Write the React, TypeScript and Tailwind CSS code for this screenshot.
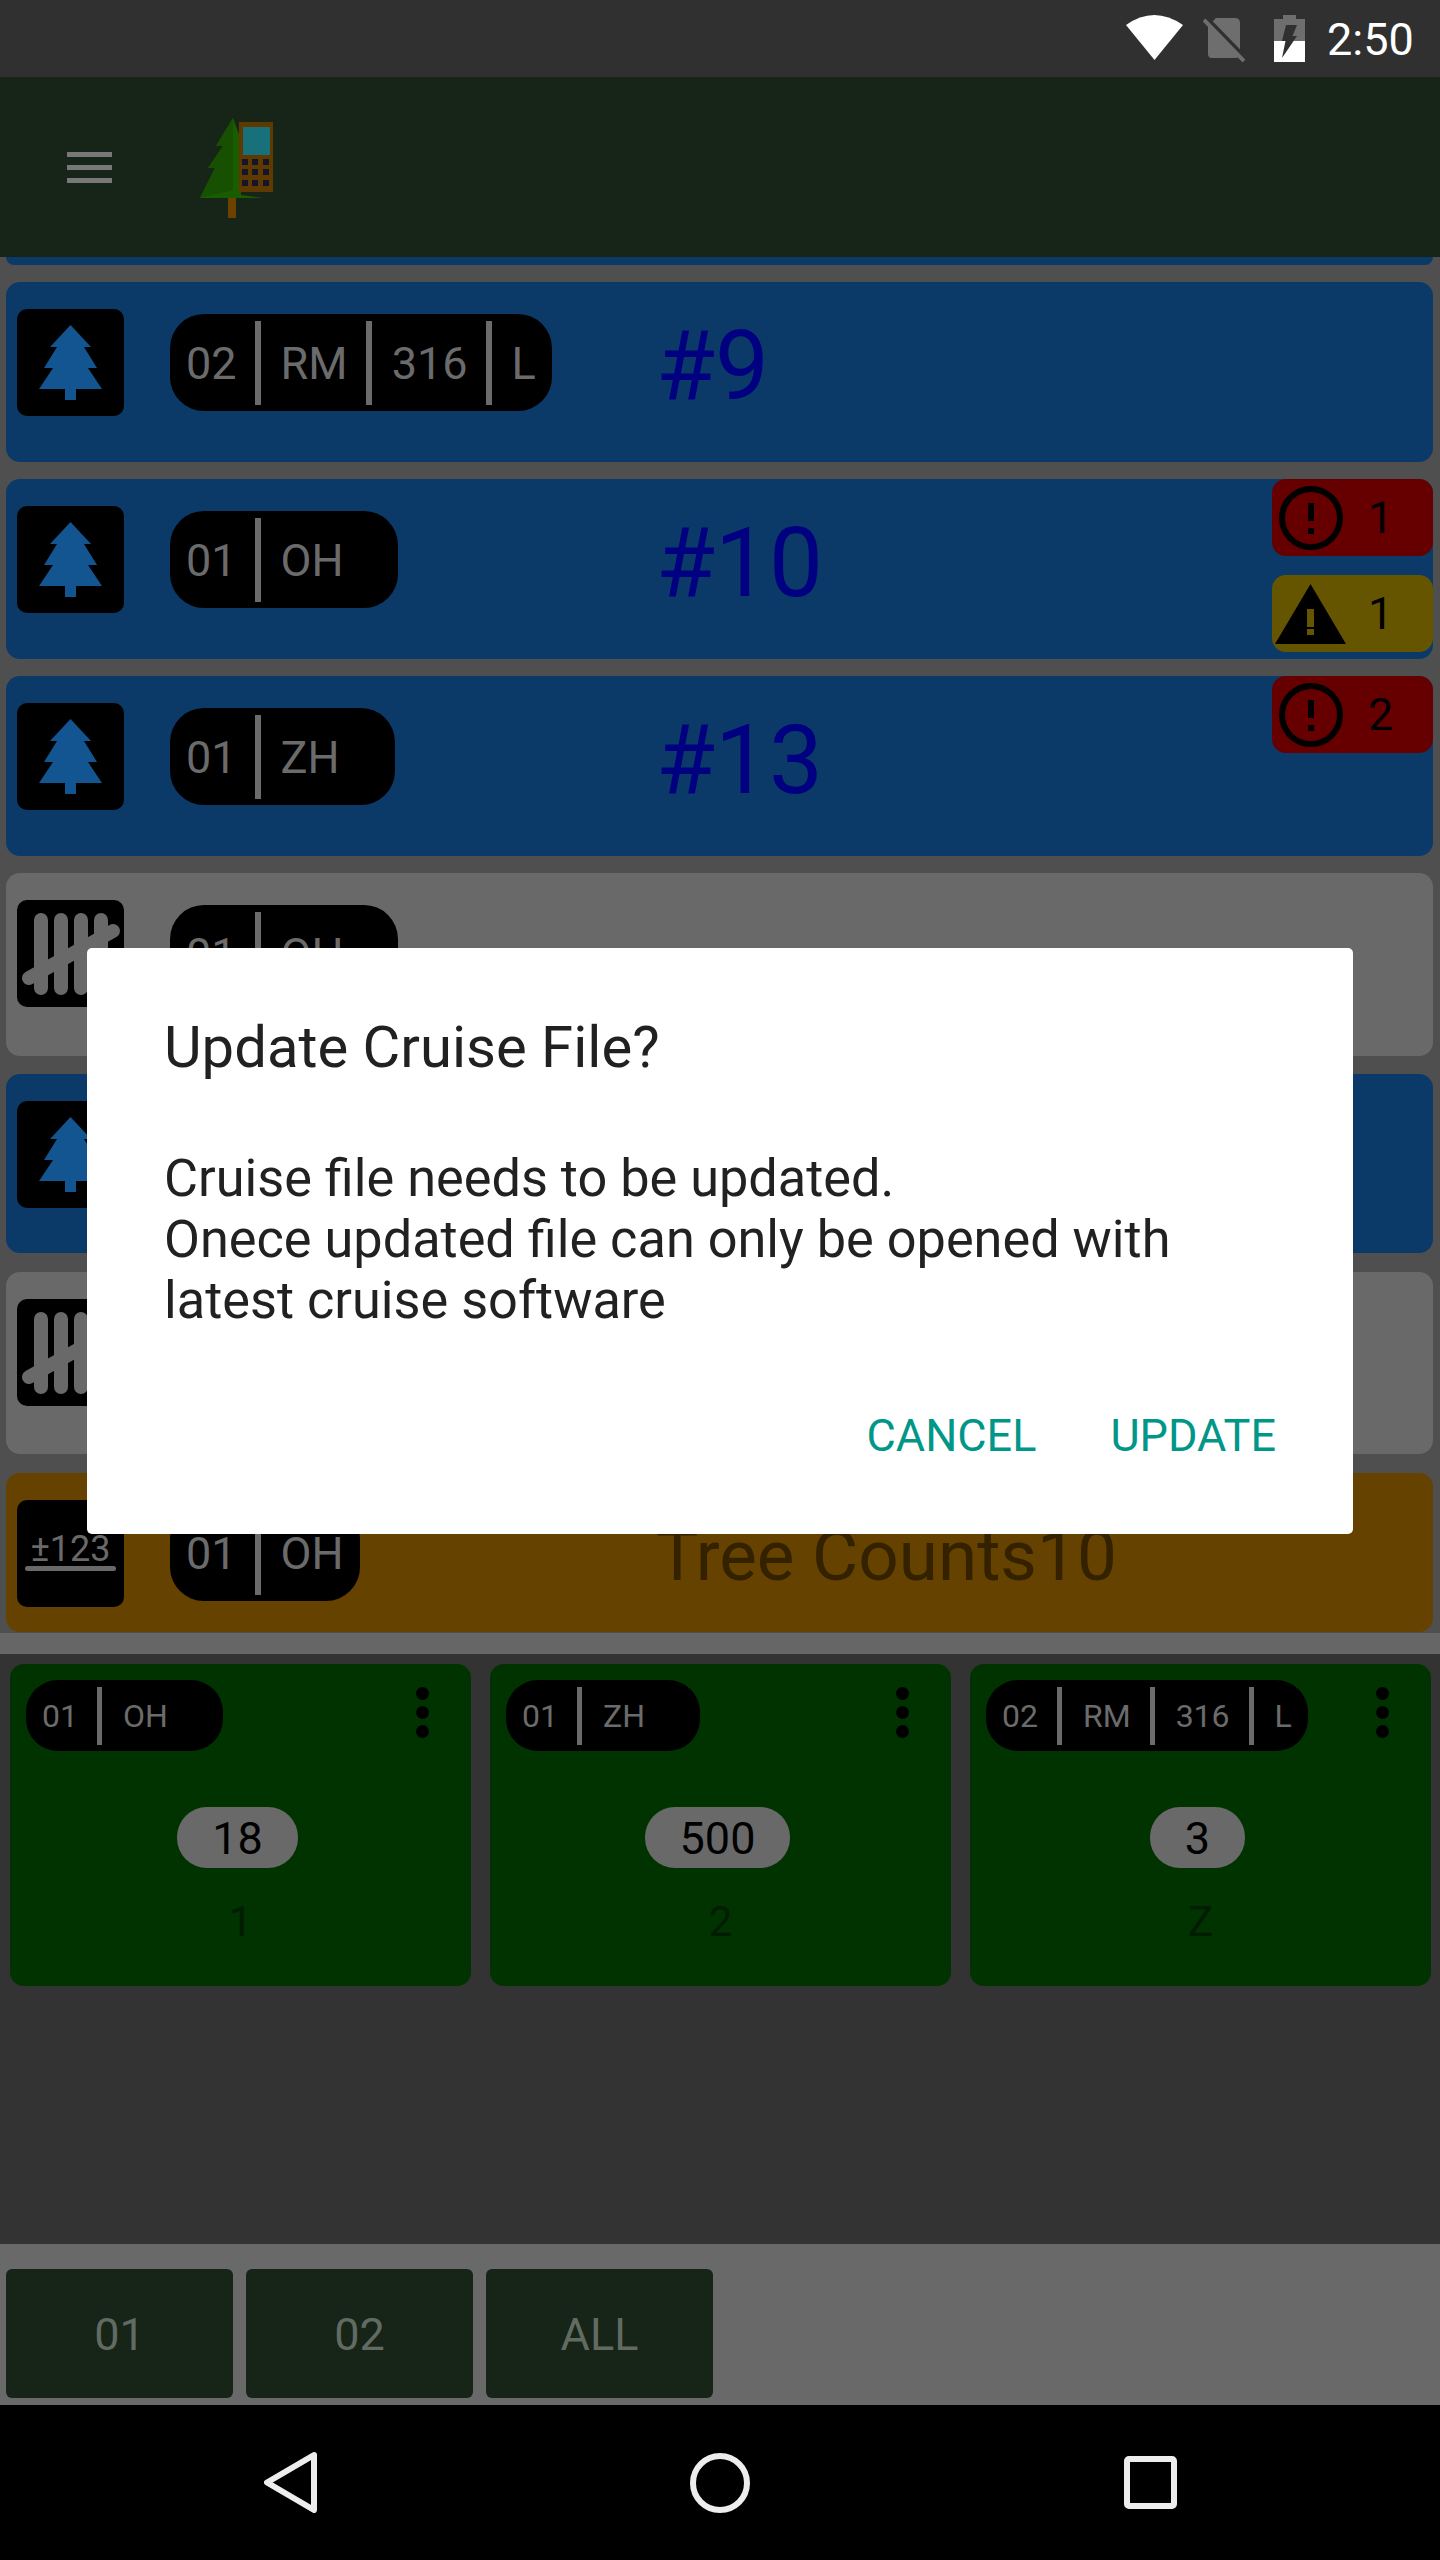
import type { ReactNode } from "react";

/** Pill of tag segments separated by thin bars. */
function TagPill({
  parts,
  size,
  className = "",
}: {
  parts: string[];
  size: "lg" | "sm";
  className?: string;
}) {
  const lg = size === "lg";
  return (
    <div
      className={`flex shrink-0 items-center bg-black text-[#6b6b6b] ${
        lg
          ? "h-[97px] rounded-[34px] pl-[16px] text-[45px] leading-[52px]"
          : "h-[71px] rounded-[32px] pl-[16px] text-[32px] leading-[38px]"
      } ${className}`}
    >
      {parts.map((part, i) => (
        <div key={i} className="flex items-center">
          {i > 0 && (
            <span
              className={
                lg
                  ? "mr-[20px] ml-[18px] h-[84px] w-[6px] bg-[#6b6b6b]"
                  : "mr-[21px] ml-[19px] h-[58px] w-[5px] bg-[#6b6b6b]"
              }
            />
          )}
          <span className={lg ? "pt-[2px]" : ""}>{part}</span>
        </div>
      ))}
    </div>
  );
}

function IconBox({ children }: { children: ReactNode }) {
  return (
    <div className="ml-[11px] mt-[27px] h-[107px] w-[107px] shrink-0 overflow-hidden rounded-[10px] bg-black">
      {children}
    </div>
  );
}

const TreeIcon = () => (
  <svg viewBox="0 0 107 107" className="h-[107px] w-[107px]">
    <path
      d="M53.5 16 L74 38 L67 38 L80 59 L71 59 L85 80 L59 80 L59 91 L48 91 L48 80 L22 80 L36 59 L27 59 L40 38 L33 38 Z"
      fill="#125590"
    />
  </svg>
);

const TallyIcon = () => (
  <svg viewBox="0 0 107 107" className="h-[107px] w-[107px]" stroke="#696969" strokeWidth="14" strokeLinecap="round">
    <path d="M24 20 V88 M44 20 V88 M64 20 V88 M84 20 V88 M12 78 L96 31" />
  </svg>
);

const CountIcon = () => (
  <div className="flex h-[107px] w-[107px] flex-col items-center text-[#696969]">
    <span className="mt-[32px] h-[34px] text-[36px] leading-[34px]">±123</span>
    <span className="h-[5px] w-[91px] rounded-full bg-[#696969]" />
  </div>
);

const AlertIcon = () => (
  <svg viewBox="0 0 64 64" className="ml-[7px] h-[64px] w-[64px] shrink-0">
    <circle cx="32" cy="32" r="29" fill="none" stroke="#000" strokeWidth="6" />
    <rect x="29" y="17" width="6" height="18" fill="#000" />
    <rect x="29" y="42" width="6" height="6" fill="#000" />
  </svg>
);

const WarnIcon = () => (
  <svg viewBox="0 0 71 60" className="ml-[3px] h-[60px] w-[71px] shrink-0">
    <path
      fillRule="evenodd"
      d="M35.5 0 L71 60 L0 60 Z M32 25 V43 H39 V25 Z M32 45 V51 H39 V45 Z"
      fill="#000"
    />
  </svg>
);

function Badge({ color, icon, count, gap }: { color: string; icon: ReactNode; count: string; gap: string }) {
  return (
    <div className={`flex h-[77px] w-[161px] items-center rounded-[14px] ${color}`}>
      {icon}
      <span className={`${gap} text-[45px] leading-[52px] text-black`}>{count}</span>
    </div>
  );
}

const errorBadge = (count: string) => (
  <Badge color="bg-[#660000]" icon={<AlertIcon />} count={count} gap="ml-[25px]" />
);

function TreeRow({
  parts,
  pillWidth,
  label,
  badges,
}: {
  parts: string[];
  pillWidth: string;
  label: string;
  badges?: ReactNode;
}) {
  return (
    <div className="relative mx-[6px] mt-[17px] flex h-[180px] w-[1427px] shrink-0 rounded-[14px] bg-[#0b3a68]">
      <IconBox>
        <TreeIcon />
      </IconBox>
      <div className="w-[532px] shrink-0">
        <TagPill parts={parts} size="lg" className={`ml-[46px] mt-[32px] ${pillWidth}`} />
      </div>
      <span className="mt-[36px] text-[96px] leading-[96px] text-[#000080]">{label}</span>
      {badges && <div className="absolute right-0 top-0 flex flex-col gap-[19px]">{badges}</div>}
    </div>
  );
}

function SamplerCard({
  parts,
  pillWidth,
  count,
  label,
}: {
  parts: string[];
  pillWidth: string;
  count: string;
  label: string;
}) {
  return (
    <div className="relative flex h-[322px] w-[461px] flex-col items-center rounded-[14px] bg-[#003300]">
      <TagPill parts={parts} size="sm" className={`ml-[16px] mt-[16px] self-start ${pillWidth}`} />
      <div className="absolute right-[42px] top-[23px] flex flex-col gap-[6px]">
        <span className="h-[13px] w-[13px] rounded-full bg-black" />
        <span className="h-[13px] w-[13px] rounded-full bg-black" />
        <span className="h-[13px] w-[13px] rounded-full bg-black" />
      </div>
      <div className="mr-[6px] mt-[56px] flex h-[61px] items-center rounded-[30px] bg-[#696969] px-[35px] pt-[2px] text-[45px] leading-[52px] text-black">
        {count}
      </div>
      <span className="mt-[30px] text-[42px] leading-[48px] text-[#011c01]">{label}</span>
    </div>
  );
}

const FilterButton = ({ label }: { label: string }) => (
  <div className="flex h-[129px] w-[227px] items-center justify-center rounded-[6px] bg-[#172418] pt-[2px] text-[45px] text-[#626b62]">
    {label}
  </div>
);

function StatusBar() {
  return (
    <div className="flex h-[77px] shrink-0 items-start bg-[#303030] pl-[1126px]">
      <svg viewBox="0 0 57 45" className="mt-[15px] h-[45px] w-[57px]">
        <path d="M28.5 45 L0 10 Q28 -10 57 10 Z" fill="#fff" />
      </svg>
      <svg viewBox="0 0 42 44" className="ml-[20px] mt-[18px] h-[44px] w-[42px]">
        <path d="M13 0 H32 Q37 0 37 5 V36 Q37 40 32 40 H9 Q5 40 5 36 V8 Z" fill="#6e6e6e" />
        <path d="M3 0 L43 41" stroke="#303030" strokeWidth="5" />
        <path d="M1 2 L41 43" stroke="#6e6e6e" strokeWidth="4" />
      </svg>
      <svg viewBox="0 0 31 47" className="ml-[29px] mt-[15px] h-[47px] w-[31px]">
        <path d="M9 0 H22 V4 H31 V26 H0 V4 H9 Z" fill="#6e6e6e" />
        <rect x="0" y="26" width="31" height="21" fill="#fff" />
        <path d="M12 10 H23 L18.5 21 H23 L8 43 L11.5 26 H8 Z" fill="#303030" />
      </svg>
      <span className="ml-[22px] mt-[14px] text-[45px] leading-[52px] text-white">2:50</span>
    </div>
  );
}

function Toolbar() {
  return (
    <div className="flex h-[180px] shrink-0 items-center bg-[#172418] pl-[67px]">
      <div className="flex w-[45px] flex-col gap-[8px]">
        <span className="h-[5px] bg-[#787878]" />
        <span className="h-[5px] bg-[#787878]" />
        <span className="h-[5px] bg-[#787878]" />
      </div>
      {/* tree + handheld logo */}
      <svg viewBox="195 115 80 105" className="ml-[84px] h-[105px] w-[80px]">
        <rect x="227" y="192" width="8" height="26" fill="#6b4200" />
        <path
          d="M232 118 L240 140 L240 195 L262 198 L199 198 L214 168 L207 168 L222 146 L215 146 Z"
          fill="#1a5c00"
        />
        <path d="M232 118 L215 146 L222 146 L207 168 L214 168 L199 198 L232 190 Z" fill="#165000" />
        <rect x="238" y="122" width="34" height="70" fill="#5f3a00" />
        <rect x="242" y="127" width="27" height="28" fill="#17707a" />
        {[244, 254, 265].map((x) =>
          [162, 172, 183].map((y) => (
            <rect key={`${x}-${y}`} x={x - 3} y={y - 3} width="6" height="6" fill="#14152a" />
          )),
        )}
      </svg>
    </div>
  );
}

function UpdateDialog() {
  return (
    <div className="absolute left-[87px] top-[948px] h-[586px] w-[1266px] rounded-[5px] bg-white pl-[77px] pt-[67px] text-[#212121]">
      <div className="text-[58px] leading-[64px]">Update Cruise File?</div>
      <div className="mt-[69px] text-[52.25px] leading-[61px]">
        <div>Cruise file needs to be updated.</div>
        <div>Onece updated file can only be opened with</div>
        <div>latest cruise software</div>
      </div>
      <div className="mt-[79px] flex justify-end gap-[74px] pr-[77px] text-[45px] leading-[52px] text-[#009688]">
        <span>CANCEL</span>
        <span>UPDATE</span>
      </div>
    </div>
  );
}

export default function App() {
  return (
    <div className="relative flex h-[2560px] w-[1440px] flex-col overflow-hidden bg-black font-[Roboto,sans-serif]">
      <StatusBar />
      <Toolbar />

      <div className="flex h-[1397px] shrink-0 flex-col overflow-hidden bg-[#4f4f4f]">
        <div className="mx-[6px] h-[8px] w-[1427px] shrink-0 rounded-b-[14px] bg-[#0b3a68]" />
        <TreeRow parts={["02", "RM", "316", "L"]} pillWidth="w-[382px]" label="#9" />
        <TreeRow
          parts={["01", "OH"]}
          pillWidth="w-[228px]"
          label="#10"
          badges={
            <>
              {errorBadge("1")}
              <Badge color="bg-[#665500]" icon={<WarnIcon />} count="1" gap="ml-[22px]" />
            </>
          }
        />
        <TreeRow parts={["01", "ZH"]} pillWidth="w-[225px]" label="#13" badges={errorBadge("2")} />

        <div className="mx-[6px] mt-[17px] flex h-[183px] w-[1427px] shrink-0 rounded-[14px] bg-[#696969]">
          <IconBox>
            <TallyIcon />
          </IconBox>
          <TagPill parts={["01", "OH"]} size="lg" className="ml-[46px] mt-[32px] w-[228px]" />
        </div>
        <div className="mx-[6px] mt-[18px] flex h-[179px] w-[1427px] shrink-0 rounded-[14px] bg-[#0b3a68]">
          <IconBox>
            <TreeIcon />
          </IconBox>
        </div>
        <div className="mx-[6px] mt-[19px] flex h-[182px] w-[1427px] shrink-0 rounded-[14px] bg-[#696969]">
          <IconBox>
            <TallyIcon />
          </IconBox>
        </div>
        <div className="mx-[6px] mt-[19px] flex h-[159px] w-[1427px] shrink-0 rounded-[14px] bg-[#664200]">
          <IconBox>
            <CountIcon />
          </IconBox>
          <div className="w-[532px] shrink-0">
            <TagPill parts={["01", "OH"]} size="lg" className="ml-[46px] mt-[31px] w-[190px]" />
          </div>
          <span className="mt-[43px] text-[71px] leading-[80px] text-[#332100]">Tree Counts10</span>
        </div>
        <div className="mt-px flex-1 bg-[#666666]" />
      </div>

      <div className="flex h-[590px] shrink-0 gap-[19px] bg-[#333333] pl-[10px] pt-[10px]">
        <SamplerCard parts={["01", "OH"]} pillWidth="w-[197px]" count="18" label="1" />
        <SamplerCard parts={["01", "ZH"]} pillWidth="w-[194px]" count="500" label="2" />
        <SamplerCard parts={["02", "RM", "316", "L"]} pillWidth="w-[322px]" count="3" label="Z" />
      </div>

      <div className="flex h-[161px] shrink-0 gap-[13px] bg-[#696969] pl-[6px] pt-[25px]">
        <FilterButton label="01" />
        <FilterButton label="02" />
        <FilterButton label="ALL" />
      </div>

      <div className="flex h-[155px] shrink-0 items-center bg-black pl-[264px]">
        <svg viewBox="0 0 53 61" className="h-[61px] w-[53px]" fill="none" stroke="#eeeeee" strokeWidth="6" strokeLinejoin="round">
          <path d="M50 3 L3 30.5 L50 58 Z" />
        </svg>
        <svg viewBox="0 0 60 60" className="ml-[373px] h-[60px] w-[60px]" fill="none" stroke="#eeeeee" strokeWidth="6">
          <circle cx="30" cy="30" r="27" />
        </svg>
        <svg viewBox="0 0 53 53" className="ml-[374px] h-[53px] w-[53px]" fill="none" stroke="#eeeeee" strokeWidth="6">
          <rect x="3" y="3" width="47" height="47" rx="2" />
        </svg>
      </div>

      <UpdateDialog />
    </div>
  );
}
